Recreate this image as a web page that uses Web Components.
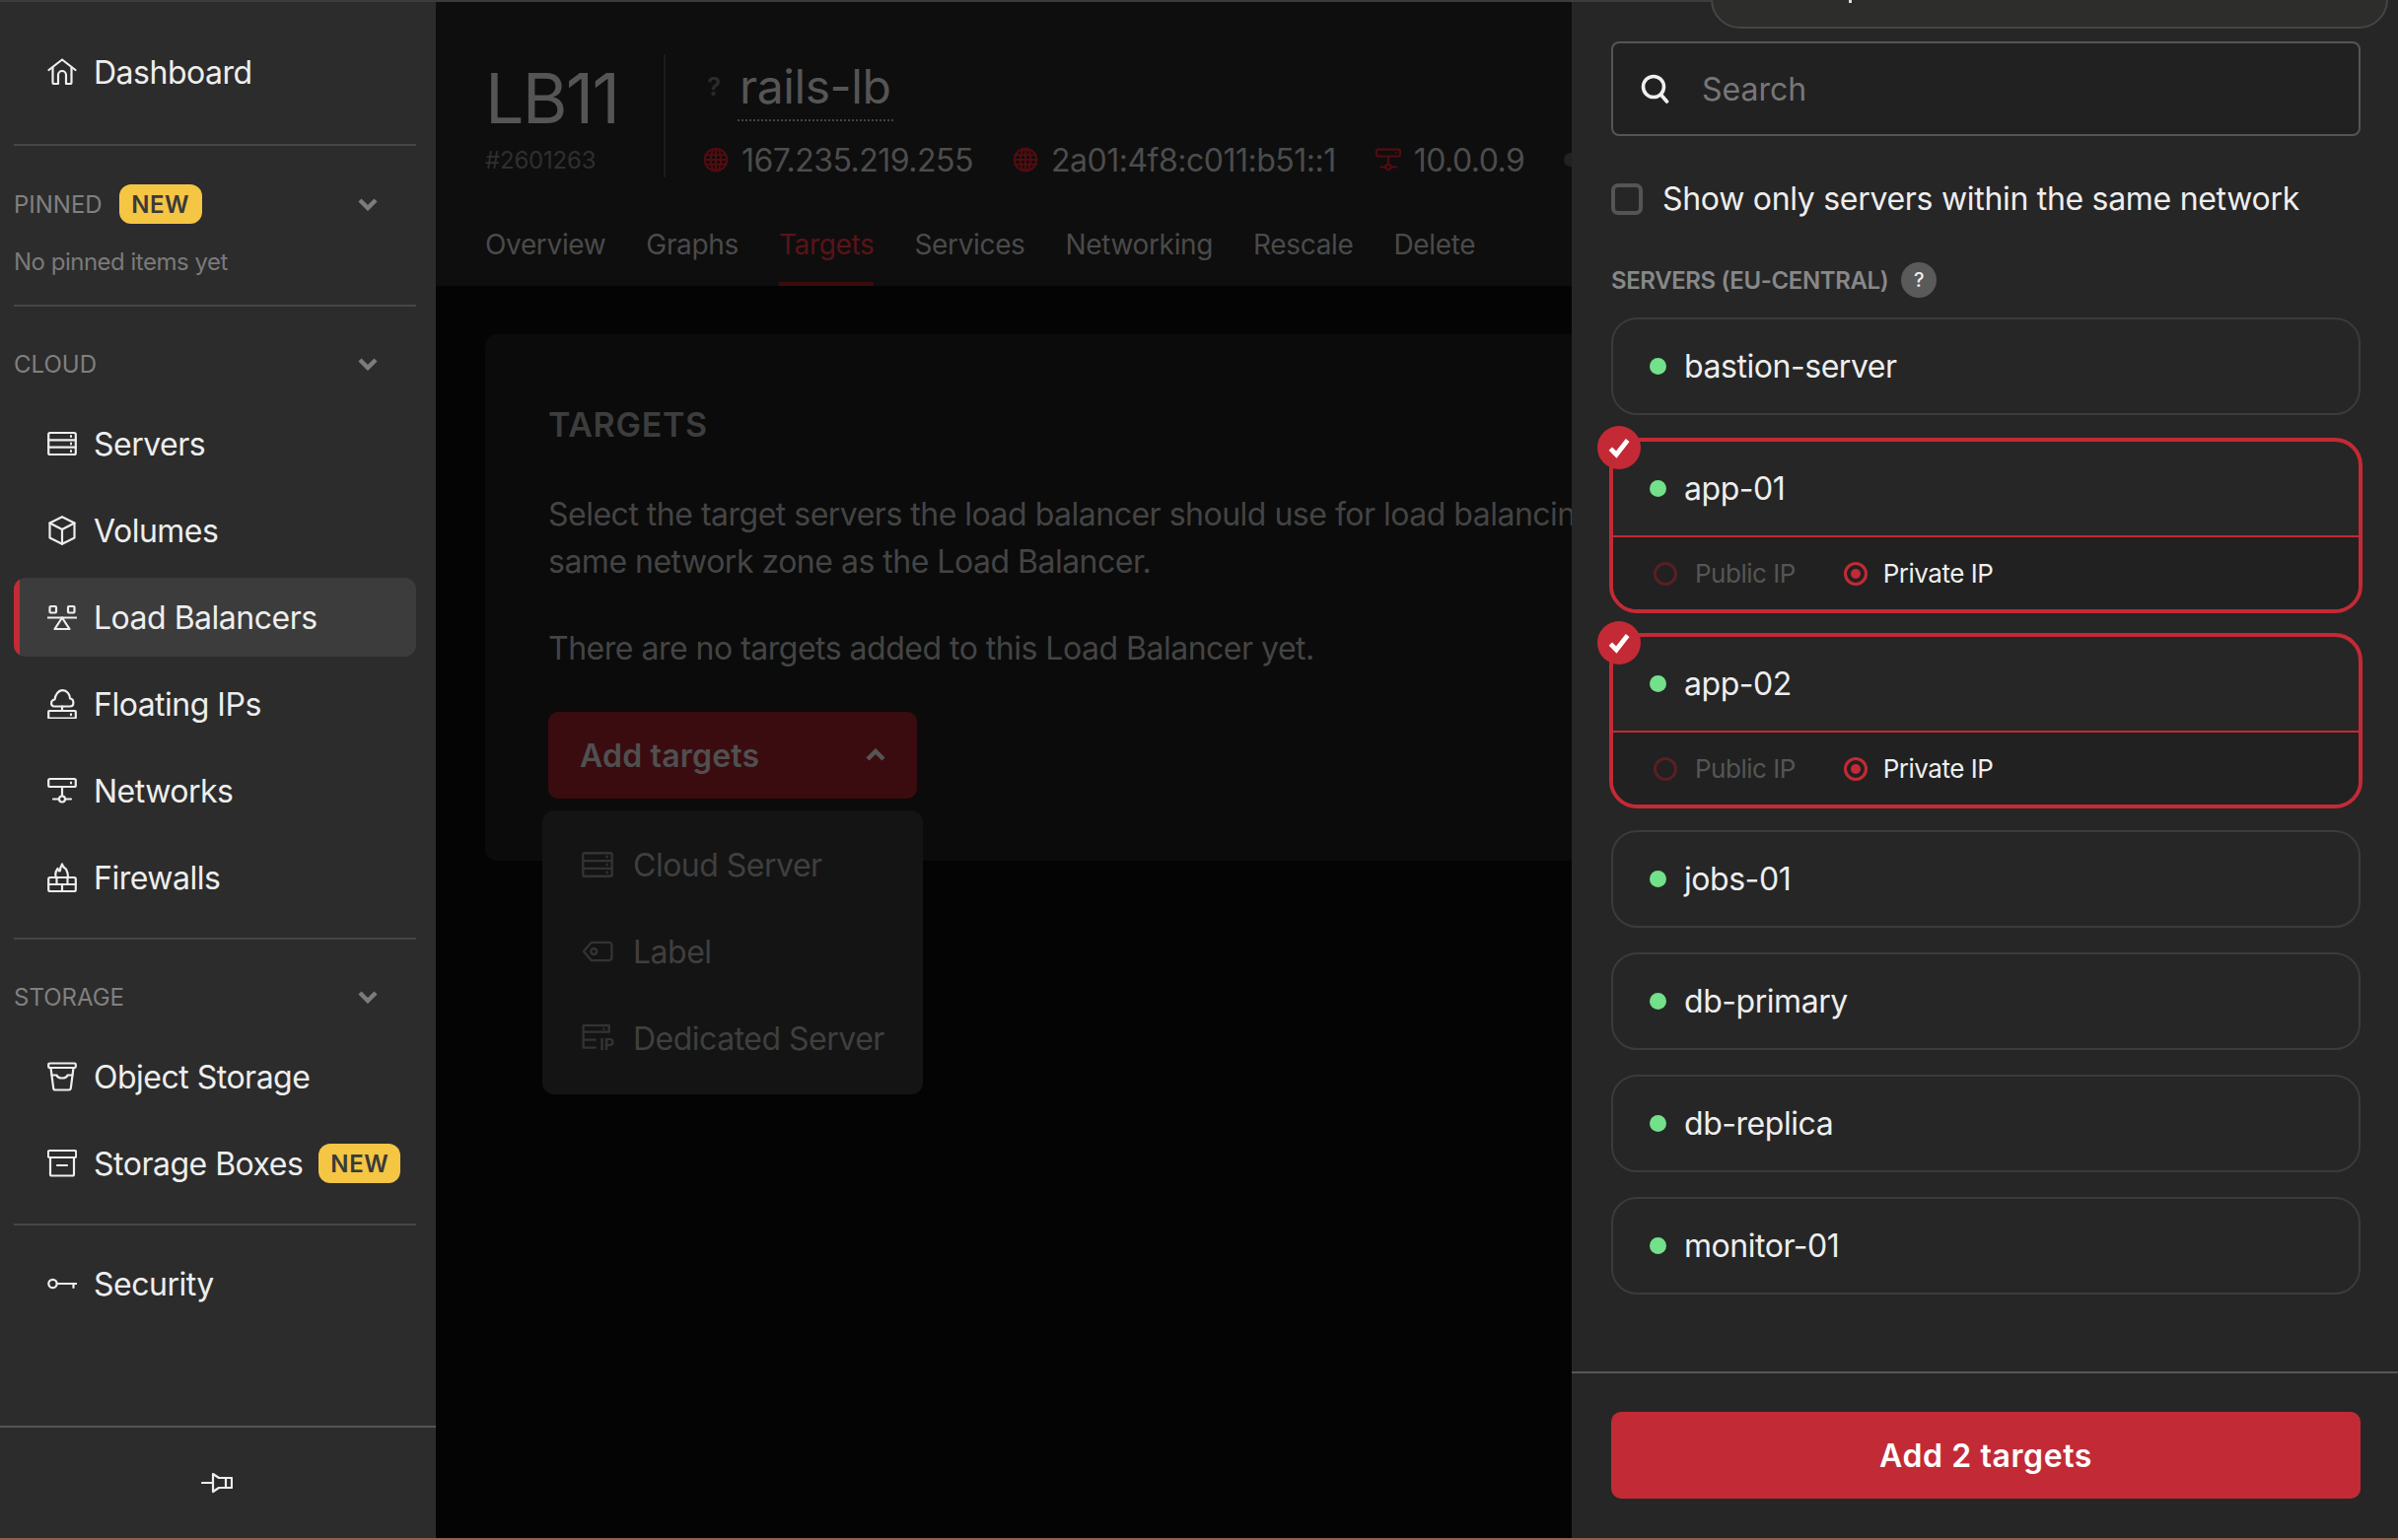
<!DOCTYPE html>
<html lang="en">
<head>
<meta charset="utf-8">
<title>Load Balancer targets</title>
<style>
    html, body { margin: 0; padding: 0; background: #040404; }
    body { width: 2432px; height: 1562px; overflow: hidden; font-family: Inter, "Liberation Sans", sans-serif; color: #eee; }
</style>
</head>
<body>
<hc-app></hc-app>

<script>
const ICONS = {
    home: `<path d="M1.5 13 15 2.5 28.5 13"/><path d="M5.5 10.5V25.5a1.5 1.5 0 0 0 1.5 1.5h4V18a4 4 0 0 1 8 0v9h4a1.5 1.5 0 0 0 1.5-1.5V10.5"/>`,
    server: `<rect x="1.2" y="4" width="27.6" height="22" rx="1.5"/><path d="M1.2 11.3h27.6M1.2 18.6h27.6"/><path d="M24 7v1M24 14.5v1M24 22v1" stroke-width="2"/>`,
    volume: `<path d="M15 1.2 27.5 7.5V22.5L15 28.8 2.5 22.5V7.5Z"/><path d="M2.5 7.5 15 14 27.5 7.5M15 14V28.8"/>`,
    balancer: `<rect x="2.5" y="4" width="6.5" height="6.5" rx="1"/><rect x="21" y="4" width="6.5" height="6.5" rx="1"/><path d="M.5 15.5h29"/><path d="M15 15.5 7.5 27h15Z"/>`,
    floating: `<path d="M8 17.5H7C3 17.5 3 11 7.5 10.5 8 6 11 1.2 15.5 1.2 20 1.2 23 5.5 23 9.5 27.5 10 27.5 17.5 23 17.5Z"/><path d="M15 17.5V22"/><rect x="1.2" y="22" width="27.6" height="7.5" rx=".8"/><path d="M24 25.2v1" stroke-width="2"/>`,
    network: `<rect x="1.2" y="3" width="27.6" height="8" rx="1.5"/><path d="M24 6.5v1" stroke-width="2"/><path d="M15 11v9"/><circle cx="15" cy="23.5" r="3"/><path d="M6 23.5h6M18 23.5h6"/>`,
    firewall: `<rect x="1.2" y="15" width="27.6" height="14" rx="1.5"/><path d="M1.2 22h27.6M9.5 15v7M20.5 15v7M15 22v7"/><path d="M9 15C7 10.5 9 8 10.5 6 11 8 12.3 8.8 13 8 13 5.5 14 3.2 15 1.5 15.8 5 18 5.5 19 6.5 19.3 8.5 22 10.5 20.5 15"/>`,
    bucket: `<rect x="1.2" y="1.5" width="27.6" height="4.5" rx="1.2"/><path d="M3.5 6 6.2 26.8A2 2 0 0 0 8.2 28.5H21.8A2 2 0 0 0 23.8 26.8L26.5 6"/><path d="M4.5 13.5H9.5C11 17.5 19 17.5 20.5 13.5H25.5"/>`,
    box: `<rect x=".8" y="2" width="28.4" height="7" rx="1.5"/><path d="M3 9V26a1.5 1.5 0 0 0 1.5 1.5h21a1.5 1.5 0 0 0 1.5-1.5V9"/><path d="M10 17h10"/>`,
    key: `<circle cx="5.5" cy="15" r="4.2"/><path d="M9.7 15H29.5M26.5 15v4"/>`,
    globe: `<circle cx="15" cy="15" r="13"/><ellipse cx="15" cy="15" rx="6" ry="13"/><path d="M15 2v26M3 9.5h24M2 15h26M3 20.5h24"/>`,
    tag: `<path d="M9 6.5H26a2.5 2.5 0 0 1 2.5 2.5V21a2.5 2.5 0 0 1-2.5 2.5H9L1.8 15Z"/><circle cx="11.5" cy="15" r="2.8"/>`,
    dedicated: `<path d="M26 3H1.5V24H13M26 3V9H1.5M1.5 16.5H13"/><path d="M21 6v.5" stroke-width="2"/>`,
    search: `<circle cx="13" cy="13" r="10.5"/><path d="M20.5 21 26.5 28"/>`
};

function icon(name, size = 30, sw = 2.2) {
    return `<svg width="${size}" height="${size}" viewBox="0 0 30 30" fill="none" stroke="currentColor" stroke-width="${sw}" stroke-linecap="round" stroke-linejoin="round">${ICONS[name]}</svg>`;
}

const chevron = `<svg width="20" height="14" viewBox="0 0 20 14" fill="none" stroke="currentColor" stroke-width="4.4"><path d="M2 3l8 8 8-8"/></svg>`;

class HcBadge extends HTMLElement {
    constructor() {
        super();
        this.attachShadow({ mode: "open" }).innerHTML = `
            <style>
                :host {
                    display: inline-flex;
                    align-items: center;
                    justify-content: center;
                    width: 84px;
                    height: 40px;
                    border-radius: 12px;
                    background: #f5c544;
                    color: #3a3a3a;
                    font-size: 24px;
                    font-weight: 600;
                    letter-spacing: 0.6px;
                }
            </style>
            <slot></slot>`;
    }
}
customElements.define("hc-badge", HcBadge);

class HcNavItem extends HTMLElement {
    constructor() {
        super();
        this.attachShadow({ mode: "open" });
    }

    connectedCallback() {
        this.shadowRoot.innerHTML = `
            <style>
                :host {
                    display: flex;
                    align-items: center;
                    box-sizing: border-box;
                    height: 80px;
                    padding-left: 34px;
                    gap: 17px;
                    border-radius: 12px;
                    color: #eee;
                    font-size: 32px;
                    letter-spacing: -0.5px;
                    overflow: hidden;
                    position: relative;
                }
                :host([active]) {
                    background: #3c3c3c;
                }
                :host([active])::before {
                    content: "";
                    position: absolute;
                    left: 0;
                    top: 0;
                    bottom: 0;
                    width: 6px;
                    background: #c22b36;
                }
                svg { flex: none; }
                ::slotted(hc-badge) { margin-left: -1px; width: 83px; }
            </style>
            ${icon(this.getAttribute("icon"))}
            <slot></slot>`;
    }
}
customElements.define("hc-nav-item", HcNavItem);

class HcSectionHead extends HTMLElement {
    constructor() {
        super();
        this.attachShadow({ mode: "open" }).innerHTML = `
            <style>
                :host {
                    display: flex;
                    align-items: center;
                    height: 40px;
                    gap: 17px;
                    color: #808080;
                    font-size: 24px;
                    position: relative;
                }
                .chev {
                    position: absolute;
                    left: 349px;
                    top: 13px;
                    color: #7c7c7c;
                    line-height: 0;
                }
            </style>
            <slot></slot>
            <span class="chev">${chevron}</span>`;
    }
}
customElements.define("hc-section-head", HcSectionHead);

class HcSidebar extends HTMLElement {
    constructor() {
        super();
        this.attachShadow({ mode: "open" }).innerHTML = `
            <style>
                :host {
                    display: flex;
                    flex-direction: column;
                    box-sizing: border-box;
                    height: 100%;
                    background: #2c2c2c;
                    border-top: 2px solid #3c3c3c;
                }
                nav {
                    display: flex;
                    flex-direction: column;
                    padding: 31px 20px 0 14px;
                }
                .rule { height: 2px; background: #464646; flex: none; }
                .group { display: flex; flex-direction: column; gap: 8px; margin-top: 21px; }
                .empty { margin-top: 24px; height: 30px; line-height: 30px; font-size: 24px; letter-spacing: -0.5px; color: #7a7a7a; }
                footer {
                    margin-top: auto;
                    height: 112px;
                    border-top: 2px solid #555;
                    display: flex;
                    align-items: center;
                    justify-content: center;
                    color: #eee;
                }
            </style>
            <nav>
                <hc-nav-item icon="home">Dashboard</hc-nav-item>
                <div class="rule" style="margin-top:33px"></div>
                <hc-section-head style="margin-top:39px">PINNED <hc-badge>NEW</hc-badge></hc-section-head>
                <div class="empty">No pinned items yet</div>
                <div class="rule" style="margin-top:28px"></div>
                <hc-section-head style="margin-top:38px">CLOUD</hc-section-head>
                <div class="group">
                    <hc-nav-item icon="server">Servers</hc-nav-item>
                    <hc-nav-item icon="volume">Volumes</hc-nav-item>
                    <hc-nav-item icon="balancer" active>Load Balancers</hc-nav-item>
                    <hc-nav-item icon="floating">Floating IPs</hc-nav-item>
                    <hc-nav-item icon="network">Networks</hc-nav-item>
                    <hc-nav-item icon="firewall">Firewalls</hc-nav-item>
                </div>
                <div class="rule" style="margin-top:21px"></div>
                <hc-section-head style="margin-top:38px">STORAGE</hc-section-head>
                <div class="group">
                    <hc-nav-item icon="bucket">Object Storage</hc-nav-item>
                    <hc-nav-item icon="box">Storage Boxes <hc-badge>NEW</hc-badge></hc-nav-item>
                </div>
                <div class="rule" style="margin-top:21px"></div>
                <hc-nav-item icon="key" style="margin-top:19px">Security</hc-nav-item>
            </nav>
            <footer>
                <svg width="32" height="22" viewBox="0 0 32 22" fill="none" stroke="currentColor" stroke-width="2.2" stroke-linejoin="round" stroke-linecap="round" style="margin-left:-3px">
                    <path d="M1 11H12"/><path d="M12 2 18 6H25V16H18L12 20Z"/><path d="M25 6H31V16H25"/>
                </svg>
            </footer>`;
    }
}
customElements.define("hc-sidebar", HcSidebar);

class HcMain extends HTMLElement {
    constructor() {
        super();
        const ip = (name, text) => `<span class="ip"><span class="ic">${icon(name, 26, 2.4)}</span>${text}</span>`;
        const menuItem = (name, text, extra = "") => `<div class="mi"><span class="mic">${icon(name, 32, 2.2)}${extra}</span>${text}</div>`;
        this.attachShadow({ mode: "open" }).innerHTML = `
            <style>
                :host {
                    display: block;
                    box-sizing: border-box;
                    height: 100%;
                    background: #040404;
                    border-top: 2px solid #3c3c3c;
                    overflow: hidden;
                }
                header {
                    height: 288px;
                    box-sizing: border-box;
                    background: #0e0e0e;
                    padding: 53px 0 0 50px;
                    display: flex;
                    flex-direction: column;
                }
                .top { display: flex; height: 125px; }
                .title { width: 181px; flex: none; }
                .lb { margin-top: 10px; height: 70px; line-height: 70px; font-size: 70px; color: #555; letter-spacing: -1.8px; font-weight: 400; }
                .num { margin-top: 16px; height: 24px; line-height: 24px; font-size: 24px; color: #2f2f2f; letter-spacing: -0.2px; }
                .vr { width: 2px; background: #1b1b1b; flex: none; }
                .details { margin-left: 38px; white-space: nowrap; }
                .name { display: flex; align-items: flex-start; height: 67px; }
                .q { width: 31px; margin-left: 4px; color: #2b2b2b; font-size: 26px; font-weight: 600; line-height: 66px; }
                .rails { font-size: 48px; line-height: 66px; height: 66px; color: #555; border-bottom: 2px dotted #444; padding: 0 2px; letter-spacing: -0.4px; }
                .ips { display: flex; align-items: center; height: 40px; margin-top: 20px; font-size: 32px; letter-spacing: -0.5px; color: #4c4c4c; gap: 40px; }
                .ip { display: inline-flex; align-items: center; gap: 13px; }
                .ic { color: #520c10; line-height: 0; }
                .more { width: 14px; height: 14px; border-radius: 50%; background: #222; flex: none; }
                .tabs { display: flex; gap: 41px; margin-top: auto; font-size: 28px; letter-spacing: -0.35px; color: #4a4a4a; height: 84px; line-height: 84px; }
                .tab { position: relative; }
                .tab.on { color: #5a1318; }
                .tab.on::after { content: ""; position: absolute; left: 0; right: 0; bottom: 0; height: 4px; background: #3d0a0e; }

                .card {
                    margin: 49px 0 0 50px;
                    width: 1300px;
                    height: 534px;
                    box-sizing: border-box;
                    padding: 72px 0 0 64px;
                    background: #0b0b0b;
                    border-radius: 12px;
                    color: #444;
                    font-size: 32px;
                    letter-spacing: -0.5px;
                    white-space: nowrap;
                }
                h2 { margin: 0; height: 40px; line-height: 40px; font-size: 34px; font-weight: 600; letter-spacing: 0.7px; color: #3d3d3d; }
                p { margin: 47px 0 0; line-height: 48px; }
                p + p { margin-top: 40px; }
                .addwrap { position: relative; margin-top: 40px; width: 374px; }
                .add {
                    height: 88px;
                    border-radius: 10px;
                    background: #3a0c10;
                    color: #505050;
                    display: flex;
                    align-items: center;
                    padding: 0 32px;
                    font-weight: 600;
                    letter-spacing: 0.2px;
                }
                .add span { flex: 1; }
                .add svg { transform: rotate(180deg); color: #555; }
                .menu {
                    position: absolute;
                    left: -6px;
                    top: 100px;
                    width: 386px;
                    height: 288px;
                    box-sizing: border-box;
                    padding-top: 11px;
                    background: #141414;
                    border-radius: 12px;
                    color: #3f3f3f;
                }
                .mi { display: flex; align-items: center; height: 88px; padding-left: 40px; gap: 20px; }
                .mic { color: #333; line-height: 0; position: relative; }
                .iptag { position: absolute; right: -1px; bottom: 2px; font-size: 16px; line-height: 16px; font-weight: 700; letter-spacing: 0; }
            </style>
            <header>
                <div class="top">
                    <div class="title">
                        <div class="lb">LB11</div>
                        <div class="num">#2601263</div>
                    </div>
                    <div class="vr"></div>
                    <div class="details">
                        <div class="name"><span class="q">?</span><span class="rails">rails-lb</span></div>
                        <div class="ips">
                            ${ip("globe", "167.235.219.255")}
                            ${ip("globe", "2a01:4f8:c011:b51::1")}
                            ${ip("network", "10.0.0.9")}
                            <span class="more"></span>
                        </div>
                    </div>
                </div>
                <div class="tabs">
                    <span class="tab">Overview</span>
                    <span class="tab">Graphs</span>
                    <span class="tab on">Targets</span>
                    <span class="tab">Services</span>
                    <span class="tab">Networking</span>
                    <span class="tab">Rescale</span>
                    <span class="tab">Delete</span>
                </div>
            </header>
            <section class="card">
                <h2>TARGETS</h2>
                <p>Select the target servers the load balancer should use for load balancing<br>same network zone as the Load Balancer.</p>
                <p>There are no targets added to this Load Balancer yet.</p>
                <div class="addwrap">
                    <div class="add"><span>Add targets</span>${chevron}</div>
                    <div class="menu">
                        ${menuItem("server", "Cloud Server")}
                        ${menuItem("tag", "Label")}
                        ${menuItem("dedicated", "Dedicated Server", `<span class="iptag">IP</span>`)}
                    </div>
                </div>
            </section>`;
    }
}
customElements.define("hc-main", HcMain);

class HcServerRow extends HTMLElement {
    constructor() {
        super();
        this.attachShadow({ mode: "open" });
    }

    connectedCallback() {
        const selected = this.hasAttribute("selected");
        this.shadowRoot.innerHTML = `
            <style>
                :host {
                    display: block;
                    box-sizing: border-box;
                    position: relative;
                    border: 2px solid #3b3b3b;
                    border-radius: 26px;
                    font-size: 32px;
                    letter-spacing: -0.45px;
                    color: #eee;
                }
                :host([selected]) {
                    border: 4px solid #c42a35;
                    border-radius: 28px;
                    margin-left: -2px;
                    margin-right: -2px;
                }
                .head {
                    display: flex;
                    align-items: center;
                    height: 95px;
                    padding-left: 37px;
                    gap: 18px;
                }
                .dot { width: 17px; height: 17px; border-radius: 50%; background: #73e08a; flex: none; }
                .opts {
                    height: 73px;
                    border-top: 2px solid #c42a35;
                    background: #212121;
                    border-radius: 0 0 24px 24px;
                    display: flex;
                    align-items: center;
                    padding-left: 41px;
                    font-size: 26px;
                    letter-spacing: -0.5px;
                }
                .opt { display: inline-flex; align-items: center; gap: 16px; color: #eee; }
                .opt.off { color: #555; margin-right: 49px; gap: 18px; }
                .radio { width: 24px; height: 24px; box-sizing: border-box; border-radius: 50%; border: 3px solid #c42a35; position: relative; }
                .off .radio { border-color: #5a1f24; }
                .opt:not(.off) .radio::after {
                    content: "";
                    position: absolute;
                    inset: 4px;
                    border-radius: 50%;
                    background: #c42a35;
                }
                .check {
                    position: absolute;
                    left: -16px;
                    top: -16px;
                    width: 44px;
                    height: 44px;
                    border-radius: 50%;
                    background: #c42a35;
                    display: flex;
                    align-items: center;
                    justify-content: center;
                }
            </style>
            ${selected ? `<span class="check"><svg width="26" height="26" viewBox="0 0 24 24" fill="none" stroke="#fff" stroke-width="4.4"><path d="M4 13l5.5 5.5L20 5"/></svg></span>` : ""}
            <div class="head"><span class="dot"></span><slot></slot></div>
            ${selected ? `<div class="opts">
                <span class="opt off"><span class="radio"></span>Public IP</span>
                <span class="opt"><span class="radio"></span>Private IP</span>
            </div>` : ""}`;
    }
}
customElements.define("hc-server-row", HcServerRow);

class HcPanel extends HTMLElement {
    constructor() {
        super();
        this.attachShadow({ mode: "open" }).innerHTML = `
            <style>
                :host {
                    display: flex;
                    flex-direction: column;
                    box-sizing: border-box;
                    height: 100%;
                    background: #262626;
                    position: relative;
                }
                .strip { position: absolute; left: 0; top: 0; width: 141px; height: 2px; background: #3c3c3c; }
                .tabbox {
                    position: absolute;
                    left: 141px;
                    top: -30px;
                    width: 687px;
                    height: 59px;
                    box-sizing: border-box;
                    background: #2d2d2b;
                    border: 2px solid #454545;
                    border-radius: 30px;
                }
                .stub { position: absolute; left: 138px; bottom: 24px; width: 3px; height: 3px; background: #ddd; }
                .content { padding: 42px 38px 0 40px; }
                .search {
                    display: flex;
                    align-items: center;
                    height: 96px;
                    box-sizing: border-box;
                    background: #212121;
                    border: 2px solid #555;
                    border-radius: 8px;
                    padding-left: 28px;
                    gap: 32px;
                    font-size: 32px;
                    color: #777;
                }
                .search svg { color: #f0f0f0; }
                .only { display: flex; align-items: center; gap: 20px; margin-top: 48px; height: 32px; line-height: 30px; font-size: 32px; letter-spacing: -0.3px; color: #eee; }
                .box { width: 32px; height: 32px; box-sizing: border-box; border: 4px solid #555; border-radius: 7px; flex: none; }
                .lbl { display: flex; align-items: center; gap: 13px; margin: 48px 0 20px; height: 36px; font-size: 24px; font-weight: 600; letter-spacing: -0.4px; color: #888; }
                .help { width: 36px; height: 36px; border-radius: 50%; background: #5a5a5a; color: #eee; font-size: 20px; font-weight: 500; display: flex; align-items: center; justify-content: center; }
                hc-server-row { margin-top: 25px; }
                hc-server-row:first-of-type { margin-top: 0; }
                hc-server-row[selected] { margin-top: 23px; }
                hc-server-row[selected] + hc-server-row[selected] { margin-top: 20px; }
                hc-server-row[selected] + hc-server-row:not([selected]) { margin-top: 22px; }
                footer {
                    margin-top: auto;
                    height: 169px;
                    box-sizing: border-box;
                    border-top: 2px solid #555;
                    padding: 39px 38px 0 40px;
                }
                .go {
                    height: 88px;
                    border-radius: 10px;
                    background: #c22b36;
                    color: #fff;
                    font-size: 32px;
                    font-weight: 600;
                    letter-spacing: 0.6px;
                    display: flex;
                    align-items: center;
                    justify-content: center;
                }
            </style>
            <div class="strip"></div>
            <div class="tabbox"><span class="stub"></span></div>
            <div class="content">
                <div class="search">${icon("search", 30, 3.6)}<span>Search</span></div>
                <div class="only"><span class="box"></span>Show only servers within the same network</div>
                <div class="lbl">SERVERS (EU-CENTRAL) <span class="help">?</span></div>
                <hc-server-row>bastion-server</hc-server-row>
                <hc-server-row selected>app-01</hc-server-row>
                <hc-server-row selected>app-02</hc-server-row>
                <hc-server-row>jobs-01</hc-server-row>
                <hc-server-row>db-primary</hc-server-row>
                <hc-server-row>db-replica</hc-server-row>
                <hc-server-row>monitor-01</hc-server-row>
            </div>
            <footer><div class="go">Add 2 targets</div></footer>`;
    }
}
customElements.define("hc-panel", HcPanel);

class HcApp extends HTMLElement {
    constructor() {
        super();
        this.attachShadow({ mode: "open" }).innerHTML = `
            <style>
                :host {
                    display: block;
                    width: 2432px;
                    height: 1562px;
                    overflow: hidden;
                }
                .cols {
                    display: grid;
                    grid-template-columns: 442px 1152px 838px;
                    height: 1560px;
                }
                .edge { height: 2px; background: #8f5f4b; }
            </style>
            <div class="cols">
                <hc-sidebar></hc-sidebar>
                <hc-main></hc-main>
                <hc-panel></hc-panel>
            </div>
            <div class="edge"></div>`;
    }
}
customElements.define("hc-app", HcApp);
</script>
</body>
</html>
